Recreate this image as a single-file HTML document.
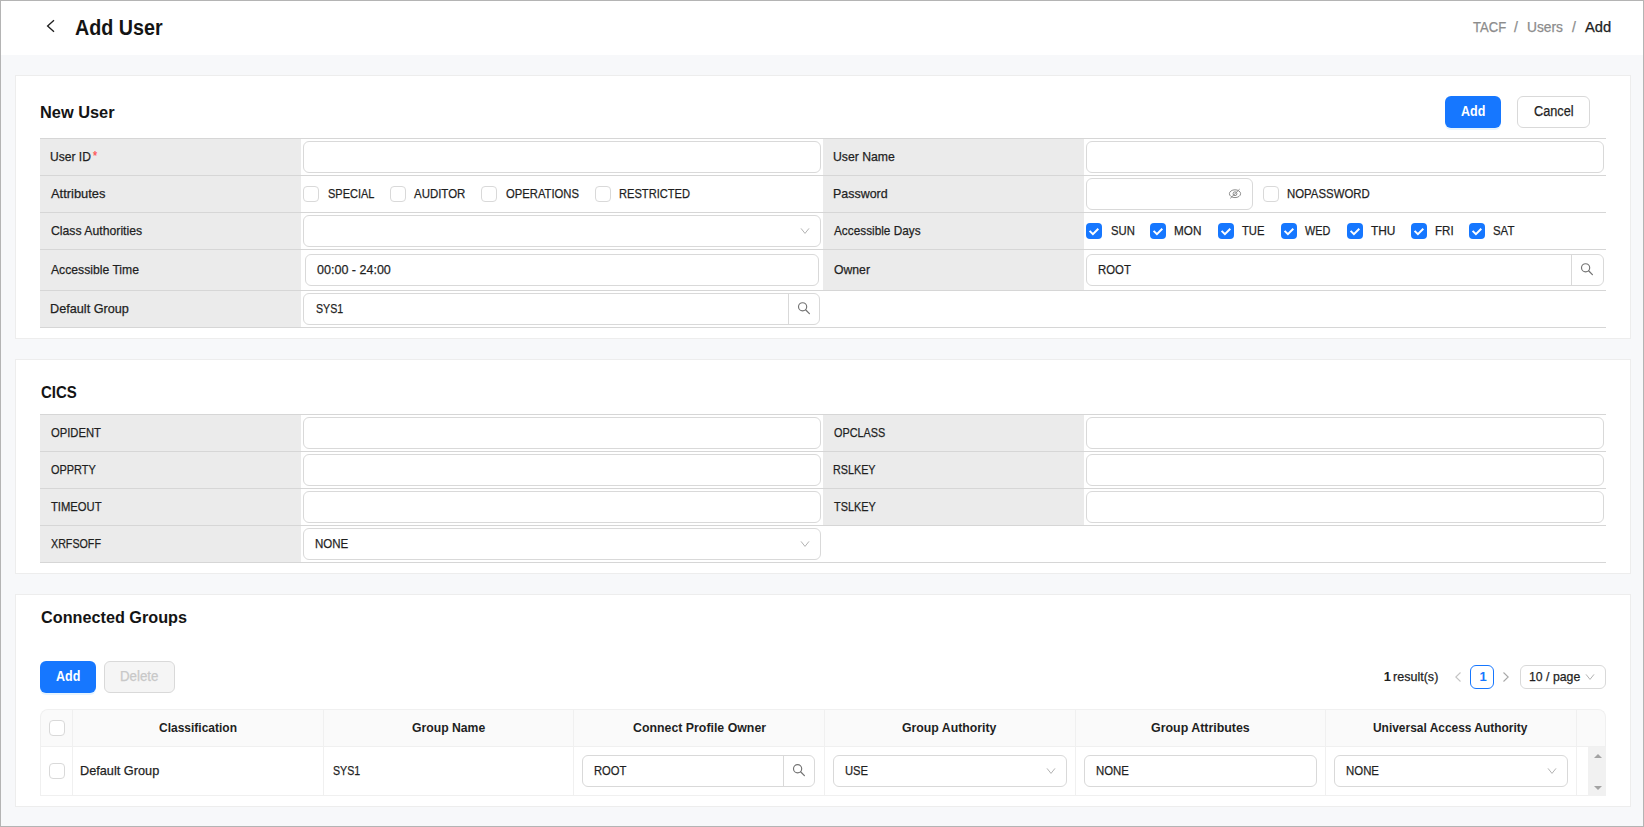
<!DOCTYPE html>
<html><head><meta charset="utf-8"><title>Add User</title>
<style>
html,body{margin:0;padding:0;width:1644px;height:827px;overflow:hidden;}
body{position:relative;font-family:"Liberation Sans", sans-serif;}
.a{position:absolute;}
.t{line-height:1;white-space:pre;transform-origin:0 0;}
.r{-webkit-text-stroke:0.25px currentColor;}
svg.a{overflow:visible;}
</style></head><body>
<div class="a" style="left:0px;top:0px;width:1644px;height:827px;background:#f7f8fa;"></div>
<div class="a" style="left:1px;top:1px;width:1642px;height:54px;background:#fff;"></div>
<div class="a" style="left:0px;top:0px;width:1644px;height:1px;background:#b4b4b4;"></div>
<div class="a" style="left:0px;top:826px;width:1644px;height:1px;background:#b4b4b4;"></div>
<div class="a" style="left:0px;top:0px;width:1px;height:827px;background:#b4b4b4;"></div>
<div class="a" style="left:1643px;top:0px;width:1px;height:827px;background:#b4b4b4;"></div>
<svg class="a" style="left:44px;top:18px;" width="14" height="16" viewBox="0 0 14 16"><path d="M10 2.2 L3.6 8 L10 13.8" fill="none" stroke="#1f1f1f" stroke-width="1.35"/></svg>
<div class="a" style="left:15px;top:75px;width:1616px;height:264px;box-sizing:border-box;border:1px solid #ededed;background:#fff;"></div>
<div class="a" style="left:15px;top:359px;width:1616px;height:215px;box-sizing:border-box;border:1px solid #ededed;background:#fff;"></div>
<div class="a" style="left:15px;top:594px;width:1616px;height:213px;box-sizing:border-box;border:1px solid #ededed;background:#fff;"></div>
<div class="a" style="left:1445px;top:96px;width:56px;height:32px;background:#1677ff;border-radius:6px;box-shadow:0 2px 0 rgba(5,145,255,0.1);"></div>
<div class="a" style="left:1517px;top:96px;width:73px;height:32px;box-sizing:border-box;border:1px solid #d9d9d9;border-radius:6px;background:#fff;"></div>
<div class="a" style="left:40px;top:138px;width:1566px;height:1px;background:#d6d6d6;"></div>
<div class="a" style="left:40px;top:175px;width:1566px;height:1px;background:#d6d6d6;"></div>
<div class="a" style="left:40px;top:212px;width:1566px;height:1px;background:#d6d6d6;"></div>
<div class="a" style="left:40px;top:249px;width:1566px;height:1px;background:#d6d6d6;"></div>
<div class="a" style="left:40px;top:290px;width:1566px;height:1px;background:#d6d6d6;"></div>
<div class="a" style="left:40px;top:327px;width:1566px;height:1px;background:#d6d6d6;"></div>
<div class="a" style="left:40px;top:139px;width:261px;height:36px;background:#ebebeb;"></div>
<div class="a" style="left:823px;top:139px;width:261px;height:36px;background:#ebebeb;"></div>
<div class="a" style="left:40px;top:176px;width:261px;height:36px;background:#ebebeb;"></div>
<div class="a" style="left:823px;top:176px;width:261px;height:36px;background:#ebebeb;"></div>
<div class="a" style="left:40px;top:213px;width:261px;height:36px;background:#ebebeb;"></div>
<div class="a" style="left:823px;top:213px;width:261px;height:36px;background:#ebebeb;"></div>
<div class="a" style="left:40px;top:250px;width:261px;height:40px;background:#ebebeb;"></div>
<div class="a" style="left:823px;top:250px;width:261px;height:40px;background:#ebebeb;"></div>
<div class="a" style="left:40px;top:291px;width:261px;height:36px;background:#ebebeb;"></div>
<div class="a" style="left:303px;top:141px;width:518px;height:32px;box-sizing:border-box;border:1px solid #d9d9d9;border-radius:6px;background:#fff;"></div>
<div class="a" style="left:1086px;top:141px;width:518px;height:32px;box-sizing:border-box;border:1px solid #d9d9d9;border-radius:6px;background:#fff;"></div>
<div class="a" style="left:303px;top:186px;width:16px;height:16px;box-sizing:border-box;border:1px solid #d9d9d9;border-radius:4px;background:#fff;"></div>
<div class="a" style="left:390px;top:186px;width:16px;height:16px;box-sizing:border-box;border:1px solid #d9d9d9;border-radius:4px;background:#fff;"></div>
<div class="a" style="left:481px;top:186px;width:16px;height:16px;box-sizing:border-box;border:1px solid #d9d9d9;border-radius:4px;background:#fff;"></div>
<div class="a" style="left:595px;top:186px;width:16px;height:16px;box-sizing:border-box;border:1px solid #d9d9d9;border-radius:4px;background:#fff;"></div>
<div class="a" style="left:1086px;top:178px;width:167px;height:32px;box-sizing:border-box;border:1px solid #d9d9d9;border-radius:6px;background:#fff;"></div>
<svg class="a" style="left:1227px;top:186px;" width="16" height="16" viewBox="0 0 16 16"><ellipse cx="8" cy="7.7" rx="5.6" ry="3.9" fill="none" stroke="#8c8c8c" stroke-width="1"/><circle cx="8" cy="7.7" r="1.9" fill="none" stroke="#8c8c8c" stroke-width="1"/><path d="M3.3 12.3 L12.6 3.2" stroke="#8c8c8c" stroke-width="1"/></svg>
<div class="a" style="left:1263px;top:186px;width:16px;height:16px;box-sizing:border-box;border:1px solid #d9d9d9;border-radius:4px;background:#fff;"></div>
<div class="a" style="left:303px;top:215px;width:518px;height:32px;box-sizing:border-box;border:1px solid #d9d9d9;border-radius:6px;background:#fff;"></div>
<svg class="a" style="left:799px;top:227px;" width="12" height="8" viewBox="0 0 12 8"><path d="M2 1.4 L6 6.4 L10 1.4" fill="none" stroke="#b3b3b3" stroke-width="1"/></svg>
<div class="a" style="left:1086px;top:223px;width:16px;height:16px;background:#1677ff;border-radius:4px;"></div>
<svg class="a" style="left:1086px;top:223px;" width="16" height="16" viewBox="0 0 16 16"><path d="M3.6 7.9 L6.9 11.1 L12.3 5.7" fill="none" stroke="#fff" stroke-width="2"/></svg>
<div class="a" style="left:1150px;top:223px;width:16px;height:16px;background:#1677ff;border-radius:4px;"></div>
<svg class="a" style="left:1150px;top:223px;" width="16" height="16" viewBox="0 0 16 16"><path d="M3.6 7.9 L6.9 11.1 L12.3 5.7" fill="none" stroke="#fff" stroke-width="2"/></svg>
<div class="a" style="left:1218px;top:223px;width:16px;height:16px;background:#1677ff;border-radius:4px;"></div>
<svg class="a" style="left:1218px;top:223px;" width="16" height="16" viewBox="0 0 16 16"><path d="M3.6 7.9 L6.9 11.1 L12.3 5.7" fill="none" stroke="#fff" stroke-width="2"/></svg>
<div class="a" style="left:1281px;top:223px;width:16px;height:16px;background:#1677ff;border-radius:4px;"></div>
<svg class="a" style="left:1281px;top:223px;" width="16" height="16" viewBox="0 0 16 16"><path d="M3.6 7.9 L6.9 11.1 L12.3 5.7" fill="none" stroke="#fff" stroke-width="2"/></svg>
<div class="a" style="left:1347px;top:223px;width:16px;height:16px;background:#1677ff;border-radius:4px;"></div>
<svg class="a" style="left:1347px;top:223px;" width="16" height="16" viewBox="0 0 16 16"><path d="M3.6 7.9 L6.9 11.1 L12.3 5.7" fill="none" stroke="#fff" stroke-width="2"/></svg>
<div class="a" style="left:1411px;top:223px;width:16px;height:16px;background:#1677ff;border-radius:4px;"></div>
<svg class="a" style="left:1411px;top:223px;" width="16" height="16" viewBox="0 0 16 16"><path d="M3.6 7.9 L6.9 11.1 L12.3 5.7" fill="none" stroke="#fff" stroke-width="2"/></svg>
<div class="a" style="left:1469px;top:223px;width:16px;height:16px;background:#1677ff;border-radius:4px;"></div>
<svg class="a" style="left:1469px;top:223px;" width="16" height="16" viewBox="0 0 16 16"><path d="M3.6 7.9 L6.9 11.1 L12.3 5.7" fill="none" stroke="#fff" stroke-width="2"/></svg>
<div class="a" style="left:305px;top:254px;width:514px;height:32px;box-sizing:border-box;border:1px solid #d9d9d9;border-radius:6px;background:#fff;"></div>
<div class="a" style="left:1086px;top:254px;width:518px;height:32px;box-sizing:border-box;border:1px solid #d9d9d9;border-radius:6px;background:#fff;"></div>
<div class="a" style="left:1571px;top:255px;width:1px;height:30px;background:#d9d9d9;"></div>
<svg class="a" style="left:1579px;top:261px;" width="16" height="16" viewBox="0 0 16 16"><circle cx="6.6" cy="6.8" r="4.1" fill="none" stroke="#737373" stroke-width="1.15"/><path d="M9.6 9.8 L13.4 13.6" stroke="#737373" stroke-width="1.25" stroke-linecap="round"/></svg>
<div class="a" style="left:303px;top:293px;width:517px;height:32px;box-sizing:border-box;border:1px solid #d9d9d9;border-radius:6px;background:#fff;"></div>
<div class="a" style="left:788px;top:294px;width:1px;height:30px;background:#d9d9d9;"></div>
<svg class="a" style="left:796px;top:300px;" width="16" height="16" viewBox="0 0 16 16"><circle cx="6.6" cy="6.8" r="4.1" fill="none" stroke="#737373" stroke-width="1.15"/><path d="M9.6 9.8 L13.4 13.6" stroke="#737373" stroke-width="1.25" stroke-linecap="round"/></svg>
<div class="a" style="left:40px;top:414px;width:1566px;height:1px;background:#d6d6d6;"></div>
<div class="a" style="left:40px;top:451px;width:1566px;height:1px;background:#d6d6d6;"></div>
<div class="a" style="left:40px;top:488px;width:1566px;height:1px;background:#d6d6d6;"></div>
<div class="a" style="left:40px;top:525px;width:1566px;height:1px;background:#d6d6d6;"></div>
<div class="a" style="left:40px;top:562px;width:1566px;height:1px;background:#d6d6d6;"></div>
<div class="a" style="left:40px;top:415px;width:261px;height:36px;background:#ebebeb;"></div>
<div class="a" style="left:823px;top:415px;width:261px;height:36px;background:#ebebeb;"></div>
<div class="a" style="left:40px;top:452px;width:261px;height:36px;background:#ebebeb;"></div>
<div class="a" style="left:823px;top:452px;width:261px;height:36px;background:#ebebeb;"></div>
<div class="a" style="left:40px;top:489px;width:261px;height:36px;background:#ebebeb;"></div>
<div class="a" style="left:823px;top:489px;width:261px;height:36px;background:#ebebeb;"></div>
<div class="a" style="left:40px;top:526px;width:261px;height:36px;background:#ebebeb;"></div>
<div class="a" style="left:303px;top:417px;width:518px;height:32px;box-sizing:border-box;border:1px solid #d9d9d9;border-radius:6px;background:#fff;"></div>
<div class="a" style="left:303px;top:454px;width:518px;height:32px;box-sizing:border-box;border:1px solid #d9d9d9;border-radius:6px;background:#fff;"></div>
<div class="a" style="left:303px;top:491px;width:518px;height:32px;box-sizing:border-box;border:1px solid #d9d9d9;border-radius:6px;background:#fff;"></div>
<div class="a" style="left:303px;top:528px;width:518px;height:32px;box-sizing:border-box;border:1px solid #d9d9d9;border-radius:6px;background:#fff;"></div>
<div class="a" style="left:1086px;top:417px;width:518px;height:32px;box-sizing:border-box;border:1px solid #d9d9d9;border-radius:6px;background:#fff;"></div>
<div class="a" style="left:1086px;top:454px;width:518px;height:32px;box-sizing:border-box;border:1px solid #d9d9d9;border-radius:6px;background:#fff;"></div>
<div class="a" style="left:1086px;top:491px;width:518px;height:32px;box-sizing:border-box;border:1px solid #d9d9d9;border-radius:6px;background:#fff;"></div>
<svg class="a" style="left:799px;top:540px;" width="12" height="8" viewBox="0 0 12 8"><path d="M2 1.4 L6 6.4 L10 1.4" fill="none" stroke="#b3b3b3" stroke-width="1"/></svg>
<div class="a" style="left:40px;top:661px;width:56px;height:32px;background:#1677ff;border-radius:6px;box-shadow:0 2px 0 rgba(5,145,255,0.1);"></div>
<div class="a" style="left:104px;top:661px;width:71px;height:32px;box-sizing:border-box;border:1px solid #d9d9d9;border-radius:6px;background:#f5f5f5;"></div>
<svg class="a" style="left:1451px;top:670px;" width="14" height="14" viewBox="0 0 14 14"><path d="M9.5 2.5 L4.8 7 L9.5 11.5" fill="none" stroke="#c4c4c4" stroke-width="1.1"/></svg>
<div class="a" style="left:1470px;top:665px;width:24px;height:24px;box-sizing:border-box;border:1px solid #1677ff;border-radius:6px;background:#fff;"></div>
<svg class="a" style="left:1499px;top:670px;" width="14" height="14" viewBox="0 0 14 14"><path d="M4.5 2.5 L9.2 7 L4.5 11.5" fill="none" stroke="#a8a8a8" stroke-width="1.1"/></svg>
<div class="a" style="left:1520px;top:665px;width:86px;height:24px;box-sizing:border-box;border:1px solid #d9d9d9;border-radius:6px;background:#fff;"></div>
<svg class="a" style="left:1584px;top:673px;" width="12" height="8" viewBox="0 0 12 8"><path d="M2 1.4 L6 6.4 L10 1.4" fill="none" stroke="#b3b3b3" stroke-width="1"/></svg>
<div class="a" style="left:40px;top:710px;width:1566px;height:36px;background:#fafafa;border-radius:8px 8px 0 0;"></div>
<div class="a" style="left:40px;top:709px;width:1566px;height:87px;box-sizing:border-box;border:1px solid #f0f0f0;border-bottom:none;border-radius:8px 8px 0 0;"></div>
<div class="a" style="left:40px;top:746px;width:1566px;height:1px;background:#f0f0f0;"></div>
<div class="a" style="left:40px;top:795px;width:1548px;height:1px;background:#f0f0f0;"></div>
<div class="a" style="left:72px;top:710px;width:1px;height:85px;background:#f0f0f0;"></div>
<div class="a" style="left:323px;top:710px;width:1px;height:85px;background:#f0f0f0;"></div>
<div class="a" style="left:573px;top:710px;width:1px;height:85px;background:#f0f0f0;"></div>
<div class="a" style="left:824px;top:710px;width:1px;height:85px;background:#f0f0f0;"></div>
<div class="a" style="left:1075px;top:710px;width:1px;height:85px;background:#f0f0f0;"></div>
<div class="a" style="left:1325px;top:710px;width:1px;height:85px;background:#f0f0f0;"></div>
<div class="a" style="left:1576px;top:710px;width:1px;height:85px;background:#f0f0f0;"></div>
<div class="a" style="left:1588px;top:747px;width:18px;height:49px;background:#f1f1f1;"></div>
<svg class="a" style="left:1592px;top:750px;" width="12" height="10" viewBox="0 0 12 10"><path d="M2 8 L6 4 L10 8 Z" fill="#a3a3a3"/></svg>
<svg class="a" style="left:1592px;top:784px;" width="12" height="10" viewBox="0 0 12 10"><path d="M2 2 L6 6 L10 2 Z" fill="#a3a3a3"/></svg>
<div class="a" style="left:49px;top:720px;width:16px;height:16px;box-sizing:border-box;border:1px solid #d9d9d9;border-radius:4px;background:#fff;"></div>
<div class="a" style="left:49px;top:763px;width:16px;height:16px;box-sizing:border-box;border:1px solid #d9d9d9;border-radius:4px;background:#fff;"></div>
<div class="a" style="left:582px;top:755px;width:233px;height:32px;box-sizing:border-box;border:1px solid #d9d9d9;border-radius:6px;background:#fff;"></div>
<div class="a" style="left:783px;top:756px;width:1px;height:30px;background:#d9d9d9;"></div>
<svg class="a" style="left:791px;top:762px;" width="16" height="16" viewBox="0 0 16 16"><circle cx="6.6" cy="6.8" r="4.1" fill="none" stroke="#737373" stroke-width="1.15"/><path d="M9.6 9.8 L13.4 13.6" stroke="#737373" stroke-width="1.25" stroke-linecap="round"/></svg>
<div class="a" style="left:833px;top:755px;width:234px;height:32px;box-sizing:border-box;border:1px solid #d9d9d9;border-radius:6px;background:#fff;"></div>
<svg class="a" style="left:1045px;top:767px;" width="12" height="8" viewBox="0 0 12 8"><path d="M2 1.4 L6 6.4 L10 1.4" fill="none" stroke="#b3b3b3" stroke-width="1"/></svg>
<div class="a" style="left:1084px;top:755px;width:233px;height:32px;box-sizing:border-box;border:1px solid #d9d9d9;border-radius:6px;background:#fff;"></div>
<div class="a" style="left:1334px;top:755px;width:234px;height:32px;box-sizing:border-box;border:1px solid #d9d9d9;border-radius:6px;background:#fff;"></div>
<svg class="a" style="left:1546px;top:767px;" width="12" height="8" viewBox="0 0 12 8"><path d="M2 1.4 L6 6.4 L10 1.4" fill="none" stroke="#b3b3b3" stroke-width="1"/></svg>
<div class="a t" style="left:75.00px;top:17px;font-size:22px;font-weight:700;color:#141414;transform:scaleX(0.8958);">Add User</div>
<div class="a t r" style="left:1473.00px;top:20px;font-size:14px;font-weight:400;color:#8c8c8c;transform:scaleX(0.9325);">TACF</div>
<div class="a t r" style="left:1514.00px;top:20px;font-size:14px;font-weight:400;color:#8c8c8c;">/</div>
<div class="a t r" style="left:1527.02px;top:20px;font-size:14px;font-weight:400;color:#8c8c8c;transform:scaleX(0.9843);">Users</div>
<div class="a t r" style="left:1572.00px;top:20px;font-size:14px;font-weight:400;color:#8c8c8c;">/</div>
<div class="a t r" style="left:1585.00px;top:20px;font-size:14px;font-weight:400;color:#1f1f1f;transform:scaleX(1.0529);">Add</div>
<div class="a t" style="left:40.04px;top:104px;font-size:17px;font-weight:700;color:#141414;transform:scaleX(0.9627);">New User</div>
<div class="a t" style="left:1461.00px;top:104px;font-size:14px;font-weight:700;color:#fff;transform:scaleX(0.8927);">Add</div>
<div class="a t r" style="left:1534.00px;top:104px;font-size:14px;font-weight:400;color:#1f1f1f;transform:scaleX(0.9087);">Cancel</div>
<div class="a t r" style="left:49.57px;top:150px;font-size:13px;font-weight:400;color:#1f1f1f;transform:scaleX(0.9280);">User ID</div>
<div class="a t r" style="left:50.50px;top:187px;font-size:13px;font-weight:400;color:#1f1f1f;transform:scaleX(0.9925);">Attributes</div>
<div class="a t r" style="left:50.50px;top:224px;font-size:13px;font-weight:400;color:#1f1f1f;transform:scaleX(0.9415);">Class Authorities</div>
<div class="a t r" style="left:50.50px;top:263px;font-size:13px;font-weight:400;color:#1f1f1f;transform:scaleX(0.9369);">Accessible Time</div>
<div class="a t r" style="left:49.53px;top:302px;font-size:13px;font-weight:400;color:#1f1f1f;transform:scaleX(0.9749);">Default Group</div>
<div class="a t r" style="left:832.66px;top:150px;font-size:13px;font-weight:400;color:#1f1f1f;transform:scaleX(0.9410);">User Name</div>
<div class="a t r" style="left:832.64px;top:187px;font-size:13px;font-weight:400;color:#1f1f1f;transform:scaleX(0.9580);">Password</div>
<div class="a t r" style="left:833.60px;top:224px;font-size:13px;font-weight:400;color:#1f1f1f;transform:scaleX(0.9075);">Accessible Days</div>
<div class="a t r" style="left:833.60px;top:263px;font-size:13px;font-weight:400;color:#1f1f1f;transform:scaleX(0.9394);">Owner</div>
<div class="a t r" style="left:93.30px;top:150px;font-size:12px;font-weight:400;color:#ff4d4f;transform:scaleX(0.8800);">*</div>
<div class="a t r" style="left:327.50px;top:187px;font-size:13px;font-weight:400;color:#1f1f1f;transform:scaleX(0.8449);">SPECIAL</div>
<div class="a t r" style="left:414.40px;top:187px;font-size:13px;font-weight:400;color:#1f1f1f;transform:scaleX(0.8812);">AUDITOR</div>
<div class="a t r" style="left:506.00px;top:187px;font-size:13px;font-weight:400;color:#1f1f1f;transform:scaleX(0.8664);">OPERATIONS</div>
<div class="a t r" style="left:618.65px;top:187px;font-size:13px;font-weight:400;color:#1f1f1f;transform:scaleX(0.8546);">RESTRICTED</div>
<div class="a t r" style="left:1286.82px;top:187px;font-size:13px;font-weight:400;color:#1f1f1f;transform:scaleX(0.8764);">NOPASSWORD</div>
<div class="a t r" style="left:1110.70px;top:224px;font-size:13px;font-weight:400;color:#1f1f1f;transform:scaleX(0.8685);">SUN</div>
<div class="a t r" style="left:1174.40px;top:224px;font-size:13px;font-weight:400;color:#1f1f1f;transform:scaleX(0.9018);">MON</div>
<div class="a t r" style="left:1242.00px;top:224px;font-size:13px;font-weight:400;color:#1f1f1f;transform:scaleX(0.8622);">TUE</div>
<div class="a t r" style="left:1305.40px;top:224px;font-size:13px;font-weight:400;color:#1f1f1f;transform:scaleX(0.8350);">WED</div>
<div class="a t r" style="left:1371.10px;top:224px;font-size:13px;font-weight:400;color:#1f1f1f;transform:scaleX(0.9153);">THU</div>
<div class="a t r" style="left:1434.51px;top:224px;font-size:13px;font-weight:400;color:#1f1f1f;transform:scaleX(0.8898);">FRI</div>
<div class="a t r" style="left:1493.20px;top:224px;font-size:13px;font-weight:400;color:#1f1f1f;transform:scaleX(0.8779);">SAT</div>
<div class="a t r" style="left:317.20px;top:263px;font-size:13px;font-weight:400;color:#1f1f1f;transform:scaleX(0.9635);">00:00 - 24:00</div>
<div class="a t r" style="left:1097.53px;top:263px;font-size:13px;font-weight:400;color:#1f1f1f;transform:scaleX(0.8740);">ROOT</div>
<div class="a t r" style="left:315.70px;top:302px;font-size:13px;font-weight:400;color:#1f1f1f;transform:scaleX(0.8179);">SYS1</div>
<div class="a t" style="left:41.00px;top:384px;font-size:17px;font-weight:700;color:#141414;transform:scaleX(0.8814);">CICS</div>
<div class="a t r" style="left:50.60px;top:426px;font-size:13px;font-weight:400;color:#1f1f1f;transform:scaleX(0.8644);">OPIDENT</div>
<div class="a t r" style="left:50.60px;top:463px;font-size:13px;font-weight:400;color:#1f1f1f;transform:scaleX(0.8404);">OPPRTY</div>
<div class="a t r" style="left:50.60px;top:500px;font-size:13px;font-weight:400;color:#1f1f1f;transform:scaleX(0.8642);">TIMEOUT</div>
<div class="a t r" style="left:50.60px;top:537px;font-size:13px;font-weight:400;color:#1f1f1f;transform:scaleX(0.8234);">XRFSOFF</div>
<div class="a t r" style="left:833.50px;top:426px;font-size:13px;font-weight:400;color:#1f1f1f;transform:scaleX(0.8357);">OPCLASS</div>
<div class="a t r" style="left:832.67px;top:463px;font-size:13px;font-weight:400;color:#1f1f1f;transform:scaleX(0.8295);">RSLKEY</div>
<div class="a t r" style="left:833.50px;top:500px;font-size:13px;font-weight:400;color:#1f1f1f;transform:scaleX(0.8369);">TSLKEY</div>
<div class="a t r" style="left:314.61px;top:537px;font-size:13px;font-weight:400;color:#1f1f1f;transform:scaleX(0.8865);">NONE</div>
<div class="a t" style="left:40.50px;top:609px;font-size:17px;font-weight:700;color:#141414;transform:scaleX(0.9544);">Connected Groups</div>
<div class="a t" style="left:56.00px;top:669px;font-size:14px;font-weight:700;color:#fff;transform:scaleX(0.8927);">Add</div>
<div class="a t r" style="left:120.05px;top:669px;font-size:14px;font-weight:400;color:#c8c8c8;transform:scaleX(0.9500);">Delete</div>
<div class="a t" style="left:1383.70px;top:670px;font-size:13px;font-weight:700;color:#1f1f1f;">1</div>
<div class="a t r" style="left:1392.80px;top:670px;font-size:13px;font-weight:400;color:#1f1f1f;transform:scaleX(0.9653);">result(s)</div>
<div class="a t" style="left:1479.50px;top:670px;font-size:13px;font-weight:700;color:#1677ff;">1</div>
<div class="a t r" style="left:1528.90px;top:670px;font-size:13px;font-weight:400;color:#1f1f1f;transform:scaleX(0.9447);">10 / page</div>
<div class="a t" style="left:159.00px;top:721px;font-size:13px;font-weight:700;color:#1f1f1f;transform:scaleX(0.9222);">Classification</div>
<div class="a t" style="left:412.00px;top:721px;font-size:13px;font-weight:700;color:#1f1f1f;transform:scaleX(0.9385);">Group Name</div>
<div class="a t" style="left:632.50px;top:721px;font-size:13px;font-weight:700;color:#1f1f1f;transform:scaleX(0.9495);">Connect Profile Owner</div>
<div class="a t" style="left:902.20px;top:721px;font-size:13px;font-weight:700;color:#1f1f1f;transform:scaleX(0.9452);">Group Authority</div>
<div class="a t" style="left:1151.00px;top:721px;font-size:13px;font-weight:700;color:#1f1f1f;transform:scaleX(0.9541);">Group Attributes</div>
<div class="a t" style="left:1373.00px;top:721px;font-size:13px;font-weight:700;color:#1f1f1f;transform:scaleX(0.9185);">Universal Access Authority</div>
<div class="a t r" style="left:80.32px;top:764px;font-size:13px;font-weight:400;color:#1f1f1f;transform:scaleX(0.9786);">Default Group</div>
<div class="a t r" style="left:332.50px;top:764px;font-size:13px;font-weight:400;color:#1f1f1f;transform:scaleX(0.8179);">SYS1</div>
<div class="a t r" style="left:594.14px;top:764px;font-size:13px;font-weight:400;color:#1f1f1f;transform:scaleX(0.8631);">ROOT</div>
<div class="a t r" style="left:844.64px;top:764px;font-size:13px;font-weight:400;color:#1f1f1f;transform:scaleX(0.8634);">USE</div>
<div class="a t r" style="left:1095.62px;top:764px;font-size:13px;font-weight:400;color:#1f1f1f;transform:scaleX(0.8756);">NONE</div>
<div class="a t r" style="left:1345.92px;top:764px;font-size:13px;font-weight:400;color:#1f1f1f;transform:scaleX(0.8783);">NONE</div>
</body></html>
